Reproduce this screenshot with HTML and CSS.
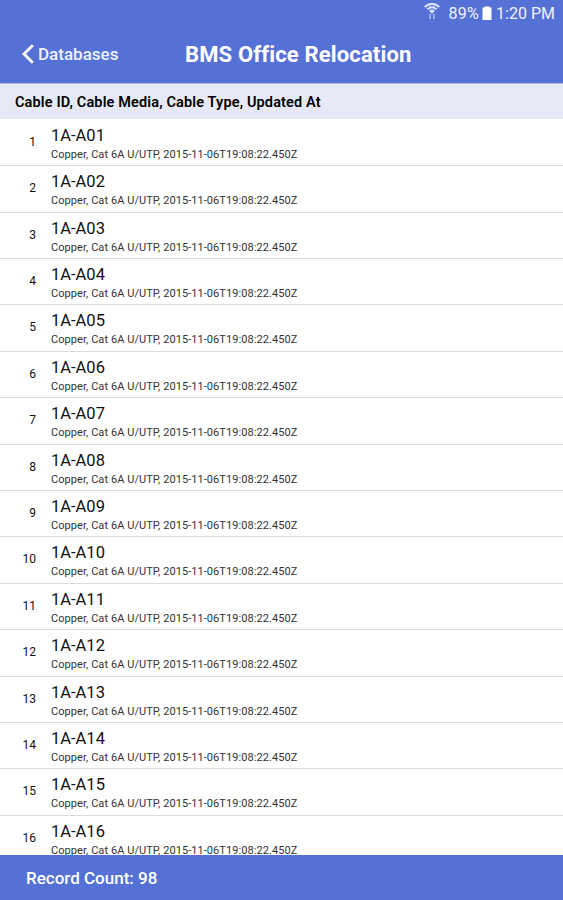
FILE: index.html
```html
<!DOCTYPE html>
<html>
    <head>
        <meta charset="utf-8">
        <title>BMS Office Relocation</title>
        <link rel="stylesheet" href="styles.css">
    </head>
    <body>
        <div class="statusBar">
            <svg class="wifi" width="16" height="18" viewBox="0 0 16 18" fill="none" stroke="#dfe6fb">
                <path d="M0.8 5 Q8 -1.2 15.2 5" stroke-width="2.2"/>
                <path d="M3.3 7.4 Q8 3.2 12.7 7.4" stroke-width="1.8"/>
                <path d="M5 8.8 Q8 6.2 11 8.8 L8 11.6 Z" fill="#dfe6fb" stroke="none"/>
                <path d="M6.2 11.5 V17 M9.8 11.5 V17" stroke="#a9b8ee" stroke-width="1.5"/>
            </svg>
            <span class="percent">89%</span>
            <svg class="battery" width="10" height="15" viewBox="0 0 10 15" fill="#fff">
                <path d="M2.5 0.5 H7.5 V1.5 H9.5 V14 H0.5 V1.5 H2.5 Z"/>
            </svg>
            <span class="clock">1:20 PM</span>
        </div>
        <div class="navBar">
            <div class="back">
                <svg width="12" height="20" viewBox="0 0 12 20" fill="none" stroke="#fff" stroke-width="2.8">
                    <path d="M10.8 1.2 L2 10 L10.8 18.8"/>
                </svg>
                <span class="backText">Databases</span>
            </div>
            <span class="title">BMS Office Relocation</span>
        </div>
        <div class="fields"><span>Cable ID, Cable Media, Cable Type, Updated At</span></div>
        <div class="list" id="list"></div>
        <div class="footer"><span>Record Count: 98</span></div>
        <script src="list.js"></script>
    </body>
</html>
```

FILE: styles.css
```css
body {
    margin: 0;
    height: 900px;
    display: flex;
    flex-direction: column;
    overflow: hidden;
    background: #fff;
    color: #111;
    font-family: Roboto, "Liberation Sans", sans-serif;
}
.statusBar {
    height: 26px;
    flex: none;
    box-sizing: border-box;
    padding-right: 8px;
    display: flex;
    align-items: center;
    justify-content: flex-end;
    background: #5571d6;
    color: #eef2ff;
    font-size: 16px;
}
.wifi {
    margin-right: 9px;
    margin-bottom: 5px;
}
.percent {
    letter-spacing: 0.3px;
}
.battery {
    margin-left: 3px;
    margin-right: 4px;
}
.navBar {
    height: 57px;
    flex: none;
    display: grid;
    grid-template-columns: 185px 1fr;
    align-items: center;
    background: #5571d6;
    color: #fff;
}
.back {
    display: flex;
    align-items: center;
    gap: 4px;
    padding-left: 22px;
    padding-bottom: 2px;
}
.backText {
    padding-top: 1px;
    font-size: 17px;
    font-weight: 500;
    color: #eef2ff;
}
.title {
    font-size: 22px;
    font-weight: 700;
    letter-spacing: 0.15px;
}
.fields {
    height: 36px;
    flex: none;
    box-sizing: border-box;
    padding: 2px 0 0 15px;
    display: flex;
    align-items: center;
    border-top: 1px solid #b9bcd2;
    background: #e6e9f5;
    color: #000;
    font-size: 14.5px;
    font-weight: 600;
    letter-spacing: 0.14px;
}
.list {
    flex: 1;
    min-height: 0;
    padding-top: 0.9px;
    overflow: hidden;
}
.row {
    height: 46.4px;
    box-sizing: border-box;
    display: flex;
    border-bottom: 1px solid #dcdcdc;
}
.number {
    width: 36px;
    margin-right: 15px;
    padding-top: 15px;
    text-align: right;
    font-size: 12px;
    line-height: 14px;
}
.name {
    padding-top: 6px;
    font-size: 16.5px;
    line-height: 20px;
}
.details {
    padding-top: 2px;
    font-size: 11px;
    line-height: 14px;
    letter-spacing: 0.07px;
    color: #333;
}
.footer {
    height: 45px;
    flex: none;
    padding-left: 26px;
    display: flex;
    align-items: center;
    background: #5571d6;
    color: #fff;
    font-size: 17px;
    font-weight: 500;
}
```

FILE: list.js
```javascript
var list = document.getElementById("list");
for(var i = 1; i <= 16; i++){
    var id = "1A-A" + (i < 10 ? "0" + i : i);
    list.innerHTML += '<div class="row"><div class="number">' + i + '</div><div>' +
        '<div class="name"><span>' + id + '</span></div>' +
        '<div class="details"><span>Copper, Cat 6A U/UTP, 2015-11-06T19:08:22.450Z</span></div>' +
        '</div></div>';
}
```
